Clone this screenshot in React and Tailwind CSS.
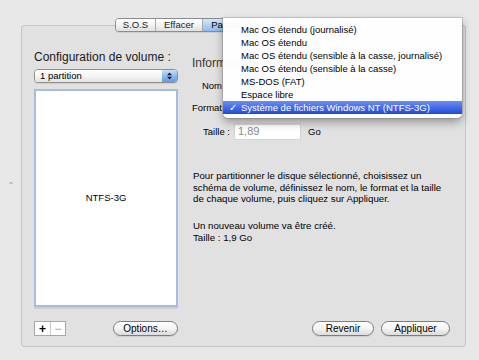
const items = [
  'Mac OS étendu (journalisé)',
  'Mac OS étendu',
  'Mac OS étendu (sensible à la casse, journalisé)',
  'Mac OS étendu (sensible à la casse)',
  'MS-DOS (FAT)',
  'Espace libre',
  'Système de fichiers Windows NT (NTFS-3G)',
];

const tabs = [
  { label: 'S.O.S', w: 'w-[39px]' },
  { label: 'Effacer', w: 'w-[47px]' },
  { label: 'Partitionner', w: 'w-[66px]', active: true },
  { label: 'RAID', w: 'w-[33px]' },
  { label: 'Restaurer', w: 'w-[66px]' },
];

function PillButton({ children, className }) {
  return (
    <button
      className={
        'h-[15px] rounded-full border border-[#7d7d7d] bg-gradient-to-b from-white via-[#f4f4f4] to-[#dcdcdc] text-[10px] leading-none text-black shadow-[0_1px_0_rgba(0,0,0,0.08)] ' +
        className
      }
    >
      {children}
    </button>
  );
}

function Tabs() {
  return (
    <div className="relative z-10 flex h-[14px] justify-center pr-[4px]">
      <div className="flex overflow-hidden rounded-[4px] border border-[#8c8c8c] shadow-[0_1px_0_rgba(0,0,0,0.08)]">
        {tabs.map((t, i) => (
          <div
            key={t.label}
            className={
              'flex items-center justify-center text-[9.5px] leading-none ' +
              t.w +
              (i > 0 ? ' border-l border-[#a9a9a9]' : '') +
              (t.active
                ? ' bg-gradient-to-b from-[#d5e6f9] via-[#b3d1f3] to-[#8fbcee] text-black'
                : ' bg-gradient-to-b from-white via-[#f3f3f3] to-[#e0e0e0] text-[#1a1a1a]')
            }
          >
            {t.label}
          </div>
        ))}
      </div>
    </div>
  );
}

function FormatMenu() {
  return (
    <div className="absolute left-[223px] top-[18px] z-20 w-[239px] rounded-b-[5px] bg-white/[0.97] pb-[4px] pt-[5px] shadow-[0_4px_10px_rgba(0,0,0,0.35),0_0_0_1px_rgba(0,0,0,0.12)]">
      {items.map((it, i) => {
        const sel = i === items.length - 1;
        return (
          <div
            key={it}
            className={
              'flex h-[13px] items-center text-[9.5px] leading-none ' +
              (sel ? 'bg-gradient-to-b from-[#6c8df2] to-[#2147dc] text-white' : 'text-black')
            }
          >
            <span className="w-[18px] pl-[6px]">{sel ? '✓' : ''}</span>
            <span>{it}</span>
          </div>
        );
      })}
    </div>
  );
}

export default function App() {
  return (
    <div
      className="relative h-[360px] w-[479px] overflow-hidden bg-[#e8e8e8] text-black"
      style={{ fontFamily: '"Liberation Sans", Arial, sans-serif' }}
    >
      <FormatMenu />
      <div className="flex pt-[18px]">
        {/* splitter mark */}
        <div className="flex w-[21px] items-center justify-center">
          <svg width="4" height="4" viewBox="0 0 4 4">
            <path d="M0.5 3 L2 1 L3.5 3" fill="none" stroke="#9a9a9a" strokeWidth="0.9" />
          </svg>
        </div>

        <div className="flex w-[445px] flex-col">
          <Tabs />
          <div className="-mt-[7px] flex h-[322px] rounded-[3px] border border-[#c6c6c6] bg-[#e1e1e1]">
            {/* left column */}
            <div className="flex w-[169px] flex-col pl-[12px] pt-[24px]">
              <div className="h-[14px] text-[12px] leading-[14px] text-[#1a1a1a]">Configuration de volume :</div>
              <div className="mt-[5px] flex h-[14px] w-[144px] overflow-hidden rounded-[4px] border border-[#8f8f8f] shadow-[0_1px_0_rgba(0,0,0,0.08)]">
                <div className="flex flex-1 items-center bg-gradient-to-b from-white via-[#f5f5f5] to-[#e2e2e2] pl-[5px] text-[9.5px] leading-none">
                  1 partition
                </div>
                <div className="flex w-[15px] items-center justify-center bg-gradient-to-b from-[#c9def7] via-[#8fbaf0] to-[#5e9ae6]">
                  <svg width="5" height="8" viewBox="0 0 5 8">
                    <path d="M0 3.2 L2.5 0.5 L5 3.2 Z M0 4.8 L2.5 7.5 L5 4.8 Z" fill="#1c1c1c" />
                  </svg>
                </div>
              </div>
              <div className="mt-[6px] flex h-[220px] w-[144px] flex-col">
                <div className="flex h-[218px] items-center justify-center border-2 border-[#a7bde0] bg-white text-[9.5px] leading-none">
                  NTFS-3G
                </div>
                <div className="h-[2px] bg-[#cfcfcf]" />
              </div>
              <div className="mt-[12px] flex items-center">
                <div className="flex h-[15px] border border-[#a8a8a8] bg-white">
                  <div className="flex w-[15px] items-center justify-center text-[12px] font-bold leading-none">+</div>
                  <div className="flex w-[15px] items-center justify-center border-l border-[#c8c8c8] text-[12px] leading-none text-[#a0a0a0]">−</div>
                </div>
                <PillButton className="ml-[47px] w-[65px]">Options…</PillButton>
              </div>
            </div>

            {/* right column */}
            <div className="flex flex-1 flex-col pt-[30px]">
              <div className="h-[14px] pl-[1px] text-[12px] leading-[14px] text-[#3a3a3a]">Informations sur le volume</div>
              <div className="mt-[9px] flex h-[14px] items-center">
                <span className="w-[31px] text-right text-[9.5px] leading-none">Nom</span>
              </div>
              <div className="mt-[8px] flex h-[14px] items-center">
                <span className="w-[31px] text-right text-[9.5px] leading-none">Format</span>
              </div>
              <div className="mt-[8px] flex h-[17px] items-center">
                <span className="w-[39px] text-right text-[9.5px] leading-none">Taille :</span>
                <div className="ml-[4px] flex h-[17px] w-[67px] items-center border border-[#d4d4d4] bg-white pl-[3px] text-[11px] leading-none text-[#8a8a8a] shadow-[inset_0_1px_1px_rgba(0,0,0,0.15)]">
                  1,89
                </div>
                <span className="ml-[7px] text-[9.5px] leading-none">Go</span>
              </div>
              <div className="mt-[30px] whitespace-nowrap pl-[2px] text-[9.7px] leading-[11.7px]">
                Pour partitionner le disque sélectionné, choisissez un
                <br />
                schéma de volume, définissez le nom, le format et la taille
                <br />
                de chaque volume, puis cliquez sur Appliquer.
              </div>
              <div className="mt-[15px] pl-[2px] text-[9.7px] leading-[11.7px]">
                Un nouveau volume va être créé.
                <br />
                Taille : 1,9 Go
              </div>
              <div className="mt-auto mb-[10px] flex pl-[121px]">
                <PillButton className="w-[62px]">Revenir</PillButton>
                <PillButton className="ml-[7px] w-[69px]">Appliquer</PillButton>
              </div>
            </div>
          </div>
        </div>
      </div>
    </div>
  );
}
